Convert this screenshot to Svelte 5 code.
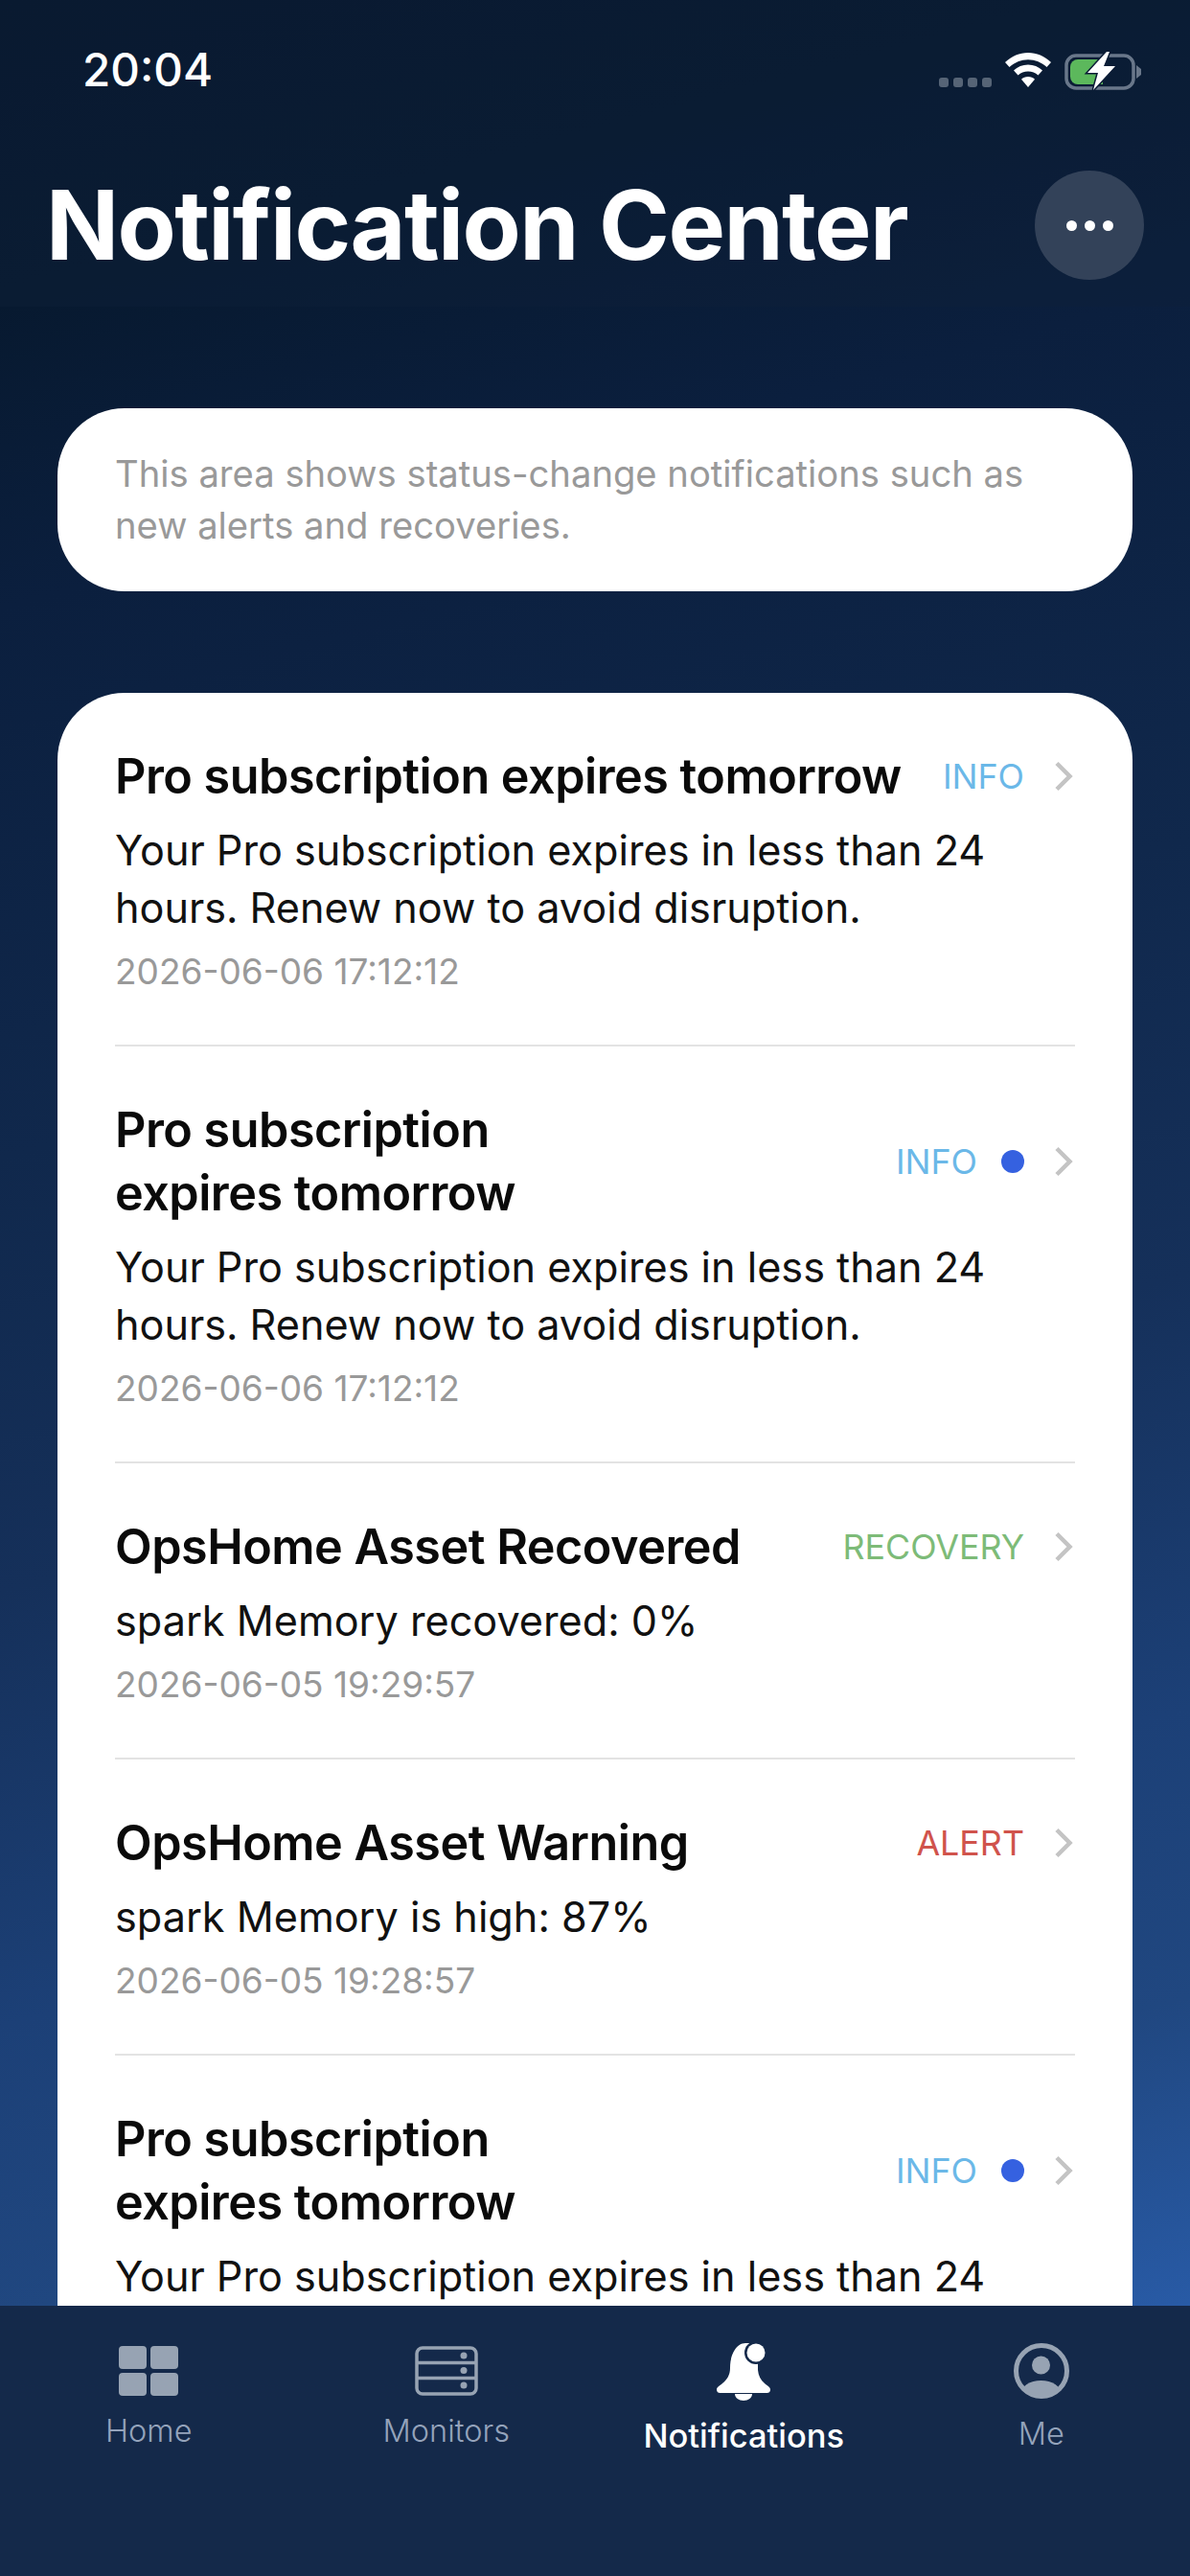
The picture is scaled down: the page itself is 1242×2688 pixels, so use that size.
<script>
  const long = 'Your Pro subscription expires in less than 24 hours. Renew now to avoid disruption.';
  const items = [
    { title: 'Pro subscription expires tomorrow', body: long, date: '2026-06-06 17:12:12', tag: 'INFO', kind: 'info', dot: false, narrow: false },
    { title: 'Pro subscription expires tomorrow', body: long, date: '2026-06-06 17:12:12', tag: 'INFO', kind: 'info', dot: true, narrow: true },
    { title: 'OpsHome Asset Recovered', body: 'spark Memory recovered: 0%', date: '2026-06-05 19:29:57', tag: 'RECOVERY', kind: 'recovery', dot: false, narrow: false },
    { title: 'OpsHome Asset Warning', body: 'spark Memory is high: 87%', date: '2026-06-05 19:28:57', tag: 'ALERT', kind: 'alert', dot: false, narrow: false },
    { title: 'Pro subscription expires tomorrow', body: 'Your Pro subscription expires in less than 24', date: '', tag: 'INFO', kind: 'info', dot: true, narrow: true }
  ];
</script>

<div class="page">
  <div class="top">
    <div class="status">
      <span class="time">20:04</span>
      <div class="sys">
        <div class="signal"><i></i><i></i><i></i><i></i></div>
        <svg class="wifi" width="48" height="36" viewBox="0 0 48 36">
          <path d="M24 0C15 0 7 3.500 0 10l4.500 5C10 10 16.500 7.200 24 7.200S38 10 43.500 15l4.500-5C41 3.500 33 0 24 0Z" fill="#fff"/>
          <path d="M24 12.500c-5.800 0-11 2.200-15 5.900l4.500 5c2.800-2.500 6.500-4 10.500-4s7.700 1.500 10.500 4l4.500-5c-4-3.700-9.200-5.900-15-5.900Z" fill="#fff"/>
          <path d="M24 25c-2.800 0-5.200 1-7 2.700L24 36l7-8.300C29.200 26 26.800 25 24 25Z" fill="#fff"/>
        </svg>
        <svg class="batt" width="80" height="40" viewBox="0 0 80 40">
          <rect x="2" y="4" width="70" height="34" rx="10" fill="none" stroke="#69778a" stroke-width="3.500"/>
          <path d="M6 16a8 8 0 0 1 8-8h26v26H14a8 8 0 0 1-8-8Z" fill="#5cb85c"/>
          <path d="M44 0 24 22h11l-5 18 23-25H41l6-15Z" fill="#fff" stroke="#0b1c36" stroke-width="3" paint-order="stroke"/>
          <path d="M75 14l5 4v6l-5 4Z" fill="#69778a"/>
        </svg>
      </div>
    </div>
    <header class="head">
      <h1>Notification Center</h1>
      <button class="more" aria-label="More"><i></i><i></i><i></i></button>
    </header>
  </div>

  <main class="scroll">
    <section class="notice">This area shows status-change notifications such as new alerts and recoveries.</section>
    <section class="card">
      {#each items as it}
        <article class="row">
          <div class="line1">
            <h2 class:narrow={it.narrow}>{it.title}</h2>
            <div class="meta">
              <span class="tag {it.kind}">{it.tag}</span>
              {#if it.dot}<span class="dot"></span>{/if}
              <svg class="chev" width="20" height="32" viewBox="0 0 20 32"><path d="M3 2.500 16.500 16 3 29.500" fill="none" stroke="#c4c4c4" stroke-width="4.500"/></svg>
            </div>
          </div>
          <p class="body">{it.body}</p>
          {#if it.date}<p class="date">{it.date}</p>{/if}
        </article>
      {/each}
    </section>
  </main>

  <nav class="tabs">
    <div class="tab home">
      <svg width="62" height="52" viewBox="0 0 62 52" fill="#97a3b3">
        <rect x="0" y="0" width="29" height="24" rx="4"/><rect x="33" y="0" width="29" height="24" rx="4"/>
        <rect x="0" y="28" width="29" height="24" rx="4"/><rect x="33" y="28" width="29" height="24" rx="4"/>
      </svg>
      <span>Home</span>
    </div>
    <div class="tab home">
      <svg width="66" height="52" viewBox="0 0 66 52">
        <rect x="2" y="2" width="62" height="48" rx="6" fill="none" stroke="#97a3b3" stroke-width="3.500"/>
        <path d="M2 17.500h62M2 33.500h62" stroke="#97a3b3" stroke-width="3.500"/>
        <circle cx="51" cy="10" r="3.500" fill="#97a3b3"/><circle cx="51" cy="25.500" r="3.500" fill="#97a3b3"/><circle cx="51" cy="41" r="3.500" fill="#97a3b3"/>
      </svg>
      <span>Monitors</span>
    </div>
    <div class="tab on">
      <svg width="56" height="60" viewBox="0 0 56 60">
        <path d="M30 0c-9 0-16 11-16 26 0 7-3 12-8 16-3 2.500-6 4-6 6.500C0 51 1.500 52 3.500 52h49c2 0 3.500-1 3.500-3.500 0-2.500-3-4-6-6.500-4-3.500-6.500-8-7-14V0H30Z" fill="#fff"/>
        <circle cx="41" cy="10" r="12" fill="#14294a"/>
        <circle cx="41" cy="10" r="9.500" fill="#fff"/>
        <path d="M19 53h18c0 4-4 7-9 7s-9-3-9-7Z" fill="#fff"/>
      </svg>
      <span>Notifications</span>
    </div>
    <div class="tab me">
      <svg width="58" height="58" viewBox="0 0 58 58">
        <defs><clipPath id="c"><circle cx="29" cy="29" r="27"/></clipPath></defs>
        <circle cx="29" cy="29" r="26.500" fill="none" stroke="#97a3b3" stroke-width="5"/>
        <circle cx="28.500" cy="23" r="9.500" fill="#97a3b3"/>
        <ellipse cx="28.500" cy="53" rx="21" ry="14" fill="#97a3b3" clip-path="url(#c)"/>
      </svg>
      <span>Me</span>
    </div>
  </nav>
</div>

<style>
  :global(body) { margin: 0; }
  .page {
    width: 1242px; height: 2688px; display: flex; flex-direction: column; overflow: hidden;
    background: linear-gradient(165deg, #06162b 0%, #07192f 10%, #0b1f3e 21%, #10284c 40%, #15305a 55%, #1c4077 70%, #204780 80%, #285aa5 90.500%);
    font-family: Inter, "Liberation Sans", sans-serif;
  }
  .top { height: 320px; flex: none; background: rgba(14, 32, 58, 0.4); }
  .status { height: 146px; display: flex; justify-content: space-between; align-items: flex-start; padding: 50px 51px 0 86px; box-sizing: border-box; }
  .time { color: #fff; font-size: 47.500px; font-weight: 500; line-height: 46px; }
  .sys { display: flex; align-items: flex-start; margin-top: 5px; }
  .signal { display: flex; gap: 5px; margin: 26px 14px 0 0; }
  .signal i { width: 10px; height: 10px; border-radius: 3px; background: #566476; }
  .wifi { margin-right: 14px; }
  .batt { margin-top: -1px; }
  .head { display: flex; align-items: center; justify-content: space-between; padding: 32px 48px 0 48px; }
  h1 { margin: 0; color: #fff; font-size: 100px; line-height: 114px; font-weight: 700; letter-spacing: -1.600px; }
  .more { width: 114px; height: 114px; border: 0; border-radius: 50%; background: #334259; display: flex; align-items: center; justify-content: center; gap: 8px; padding: 0; }
  .more i { width: 11px; height: 11px; border-radius: 50%; background: #fff; }
  .scroll { flex: 1; min-height: 0; overflow: hidden; padding: 106px 60px 0; }
  .notice { background: #fff; border-radius: 70px; padding: 41px 60px 42px; color: #999; font-size: 38.200px; line-height: 54px; }
  .card { background: #fff; border-radius: 70px 70px 0 0; margin-top: 106px; padding: 0 60px 40px; }
  .row { padding: 54px 0 53px; border-bottom: 2px solid #e3e3e3; }
  .row:last-child { border-bottom: 0; }
  .line1 { display: flex; justify-content: space-between; align-items: center; }
  h2 { margin: 0; color: #0a0a0a; font-size: 50.300px; line-height: 66px; font-weight: 600; letter-spacing: -0.500px; }
  h2.narrow { width: 500px; }
  .meta { display: flex; align-items: center; flex: none; padding-right: 2px; }
  .tag { font-size: 35.800px; line-height: 46px; }
  .info { color: #6bb8e8; }
  .recovery { color: #7dbb78; }
  .alert { color: #d0534c; }
  .dot { width: 24px; height: 24px; border-radius: 50%; background: #3561e0; margin-left: 25px; }
  .chev { margin-left: 31px; }
  .body { margin: 14px 0 0; color: #111; font-size: 43.200px; line-height: 60px; }
  .date { margin: 14px 0 0; color: #999; font-size: 37px; line-height: 46px; }
  .tabs { height: 282px; flex: none; background: #14294a; display: grid; grid-template-columns: repeat(4, 1fr); }
  .tab { display: flex; flex-direction: column; align-items: center; color: #94a3bb; font-size: 32.500px; font-weight: 300; }
  .tab svg { margin-top: 42px; }
  .tab span { line-height: 40px; margin-top: 17px; }
  .on { color: #fff; font-weight: 500; font-size: 34.500px; }
  .on svg { margin-top: 39px; }
  .on span { margin-top: 17px; }
  .me svg { margin-top: 39px; }
  .me span { margin-top: 17px; }
</style>
